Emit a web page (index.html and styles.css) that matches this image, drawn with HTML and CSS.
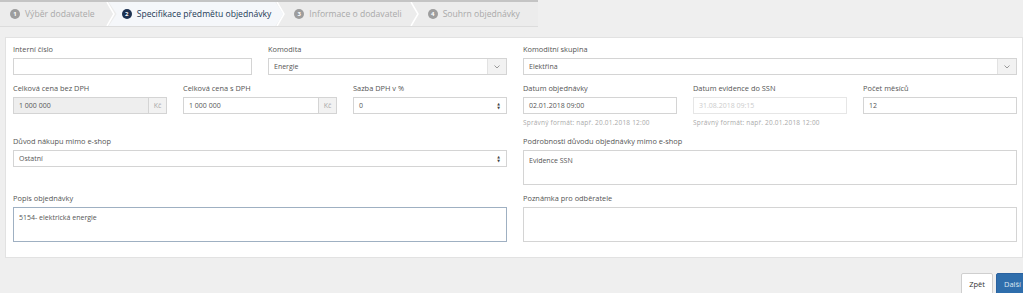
FILE: index.html
```html
<!DOCTYPE html>
<html>
<head>
    <meta charset="utf-8">
    <title>Specifikace předmětu objednávky</title>
    <link rel="stylesheet" href="styles.css">
</head>
<body>
    <div class="steps">
        <div class="step first"><span class="num">1</span>Výběr dodavatele</div>
        <svg class="sep" width="10" height="24"><polyline points="1,0 8,12 1,24" fill="none" stroke="#fff" stroke-width="1.5"/></svg>
        <div class="step active"><span class="num">2</span>Specifikace předmětu objednávky</div>
        <svg class="sep" width="10" height="24"><polyline points="1,0 8,12 1,24" fill="none" stroke="#fff" stroke-width="1.5"/></svg>
        <div class="step"><span class="num">3</span>Informace o dodavateli</div>
        <svg class="sep" width="10" height="24"><polyline points="1,0 8,12 1,24" fill="none" stroke="#fff" stroke-width="1.5"/></svg>
        <div class="step last"><span class="num">4</span>Souhrn objednávky</div>
    </div>

    <div class="panel">
        <div class="row">
            <div class="half two">
                <div class="group">
                    <label>Interní číslo</label>
                    <div class="input"></div>
                </div>
                <div class="group">
                    <label>Komodita</label>
                    <div class="input select">Energie<span class="drop"><svg width="6" height="4"><polyline points="0.5,0.5 3,3 5.5,0.5" fill="none" stroke="#999" stroke-width="1"/></svg></span></div>
                </div>
            </div>
            <div class="half">
                <div class="group">
                    <label>Komoditní skupina</label>
                    <div class="input select">Elektřina<span class="drop"><svg width="6" height="4"><polyline points="0.5,0.5 3,3 5.5,0.5" fill="none" stroke="#999" stroke-width="1"/></svg></span></div>
                </div>
            </div>
        </div>

        <div class="row">
            <div class="half three">
                <div class="group">
                    <label>Celková cena bez DPH</label>
                    <div class="addon-wrap"><div class="input grey">1 000 000</div><span class="addon">Kč</span></div>
                </div>
                <div class="group">
                    <label>Celková cena s DPH</label>
                    <div class="addon-wrap"><div class="input">1 000 000</div><span class="addon">Kč</span></div>
                </div>
                <div class="group">
                    <label>Sazba DPH v %</label>
                    <div class="input spin">0<span class="arrows">&#9650;<br>&#9660;</span></div>
                </div>
            </div>
            <div class="half three">
                <div class="group">
                    <label>Datum objednávky</label>
                    <div class="input">02.01.2018 09:00</div>
                    <div class="help">Správný formát: např. 20.01.2018 12:00</div>
                </div>
                <div class="group">
                    <label>Datum evidence do SSN</label>
                    <div class="input disabled">31.08.2018 09:15</div>
                    <div class="help">Správný formát: např. 20.01.2018 12:00</div>
                </div>
                <div class="group">
                    <label>Počet měsíců</label>
                    <div class="input">12</div>
                </div>
            </div>
        </div>

        <div class="row">
            <div class="half">
                <div class="group">
                    <label>Důvod nákupu mimo e-shop</label>
                    <div class="input spin">Ostatní<span class="arrows">&#9650;<br>&#9660;</span></div>
                </div>
            </div>
            <div class="half">
                <div class="group">
                    <label>Podrobnosti důvodu objednávky mimo e-shop</label>
                    <div class="input area">Evidence SSN</div>
                </div>
            </div>
        </div>

        <div class="row">
            <div class="half">
                <div class="group">
                    <label>Popis objednávky</label>
                    <div class="input area focus">5154- elektrická energie</div>
                </div>
            </div>
            <div class="half">
                <div class="group">
                    <label>Poznámka pro odběratele</label>
                    <div class="input area"></div>
                </div>
            </div>
        </div>
    </div>

    <div class="footer">
        <button class="btn">Zpět</button>
        <button class="btn primary">Další</button>
    </div>
</body>
</html>
```

FILE: styles.css
```css
body { margin: 0; background: #efefef; font-family: "Open Sans", "DejaVu Sans", sans-serif; font-size: 7px; color: #555; overflow: hidden; }

.steps { display: flex; align-items: center; width: 538px; height: 24px; background: #ececec; border-top: 2px solid #c4c4c4; border-bottom: 1px solid #dcdcdc; white-space: nowrap; }
.step { flex: none; display: flex; align-items: center; height: 24px; font-size: 8.6px; color: #a9a9a9; padding: 0 6px 0 6px; }
.step.first { padding-left: 10px; padding-right: 9px; }
.step.active { color: #243a56; background: #f5f7fa; padding-left: 13px; padding-right: 12px; margin: 0 -9px; clip-path: polygon(0 0, calc(100% - 8px) 0, 100% 50%, calc(100% - 8px) 100%, 0 100%, 8px 50%); }
.step .num { display: inline-flex; width: 10px; height: 10px; border-radius: 50%; background: #9d9d9d; color: #fff; font-size: 6px; font-weight: bold; align-items: center; justify-content: center; margin-right: 5px; }
.step.active .num { background: #1d3150; }
.sep { flex: none; margin: 0 2px; }

.panel { margin: 10px 0 0 5px; background: #fff; border: 1px solid #e2e2e2; padding: 6px 5px 7px 7px; }
.row { display: grid; grid-template-columns: 1fr 1fr; column-gap: 16px; }
.half { display: grid; grid-template-columns: 1fr; column-gap: 16px; }
.half.two { grid-template-columns: 1fr 1fr; }
.half.three { grid-template-columns: 1fr 1fr 1fr; }
.group { margin-bottom: 8px; }
label { display: block; font-size: 7.4px; line-height: 11px; margin-bottom: 3px; color: #555; }

.input { position: relative; box-sizing: border-box; height: 17px; line-height: 15px; border: 1px solid #d4d4d4; background: #fff; padding: 0 5px; color: #555; }
.input.grey { background: #eee; }
.input.disabled { border-color: #e6e6e6; color: #ccc; }
.input.area { height: 35px; padding-top: 2px; }
.input.focus { border-color: #9fb0c2; }
.select .drop { position: absolute; right: 0; top: 0; bottom: 0; width: 18px; background: #f2f2f2; border-left: 1px solid #e2e2e2; display: flex; align-items: center; justify-content: center; }
.spin .arrows { position: absolute; right: 6px; top: 4px; font-size: 3.5px; line-height: 4px; color: #444; }

.addon-wrap { display: flex; }
.addon-wrap .input { flex: 1; border-right: none; }
.addon { box-sizing: border-box; width: 19px; height: 17px; line-height: 15px; border: 1px solid #d4d4d4; background: #f2f2f2; color: #aaa; font-size: 7px; text-align: center; }

.help { margin-top: 4px; line-height: 10px; font-size: 6.5px; letter-spacing: 0.2px; color: #aaa; }

.footer { display: flex; justify-content: flex-end; gap: 3px; margin: 15px -6px 0 0; }
.btn { box-sizing: border-box; height: 22px; padding: 0 7px; border: 1px solid #cfcfcf; background: #fff; color: #333; font-family: "Open Sans", sans-serif; font-size: 7.5px; border-radius: 2px; }
.btn.primary { background: #2f6eac; border-color: #2a62a0; color: #dde8f3; width: 33px; }
```
